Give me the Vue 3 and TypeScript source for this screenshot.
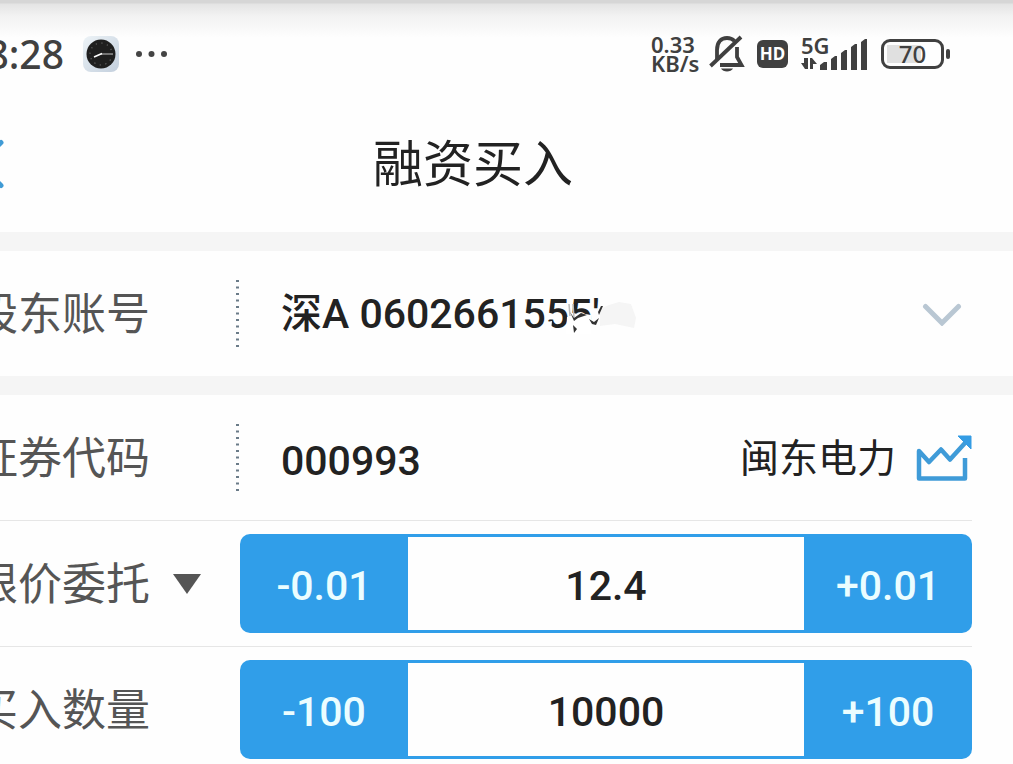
<script setup lang="ts">
import { ref } from 'vue'

interface Stepper {
  id: string
  step: string
  value: string
}

const account = ref("深A 0602661555'")
const code = ref('000993')
const orderType = ref('限价委托')
const price = ref<Stepper>({ id: 'price', step: '0.01', value: '12.4' })
const quantity = ref<Stepper>({ id: 'quantity', step: '100', value: '10000' })

function change(item: Stepper, sign: number) {
  const digits = item.step.includes('.') ? 2 : 0
  const next = Math.max(0, Number(item.value) + sign * Number(item.step))
  item.value = next.toFixed(digits)
}
</script>

<template>
  <div class="page">
    <header class="top">
      <div class="status">
        <div class="status-left">
          <span class="time">8:28</span>
          <svg class="clock" width="36" height="36" viewBox="0 0 36 36" aria-hidden="true">
            <defs>
              <linearGradient id="tile" x1="0" y1="0" x2="1" y2="1">
                <stop offset="0" stop-color="#edf3f7" />
                <stop offset="1" stop-color="#c3cfdd" />
              </linearGradient>
            </defs>
            <rect width="36" height="36" rx="8" fill="url(#tile)" />
            <circle cx="18" cy="18" r="14.5" fill="#1f1f1f" />
            <circle cx="18" cy="18" r="11" fill="none" stroke="#666" stroke-width="1.2" stroke-dasharray="1.2 4.56" />
            <path d="M18 18H30" stroke="#8a8a8a" stroke-width="1.6" />
            <path d="M11 21L19 17.500" stroke="#fff" stroke-width="1.6" />
          </svg>
          <svg class="dots" width="32" height="6" viewBox="0 0 32 6" fill="#444" aria-hidden="true">
            <circle cx="3" cy="3" r="3" />
            <circle cx="15.500" cy="3" r="3" />
            <circle cx="28" cy="3" r="3" />
          </svg>
        </div>
        <div class="status-right">
          <div class="speed"><span>0.33</span><span>KB/s</span></div>
          <svg class="bell" width="36" height="40" viewBox="0 0 36 40" fill="none" stroke="#404040" stroke-width="3.800" aria-hidden="true">
            <path d="M8 25V16C8 8 12 4 18 4C21 4 23.500 5 25.500 7" />
            <path d="M28 13V23L32.500 31H11" />
            <path d="M1.500 32L32 3" stroke-width="3.800" />
            <path d="M12 34.500H24C22 38.500 14 38.500 12 34.500Z" fill="#404040" stroke="none" />
          </svg>
          <span class="hd">HD</span>
          <div class="signal">
            <span class="net">5G</span>
            <svg width="68" height="34" viewBox="0 0 68 34" fill="#404040" aria-hidden="true">
              <path d="M4 21H8V32H5L1 26H4ZM10 21H12L17 27H13V32H10Z" />
              <path d="M20 33V28L24 25H27V33ZM31 33V22L35 19H37V33ZM41 33V16L45 13H47V33ZM51 33V10L55 7H57V33ZM61 33V5L65 2H67V33Z" />
            </svg>
          </div>
          <div class="battery"><span>70</span></div>
        </div>
      </div>
      <div class="title-bar">
        <button class="back" type="button" aria-label="返回">
          <svg width="28" height="52" viewBox="0 0 28 52" fill="none" stroke="#409bd5" stroke-width="5" stroke-linecap="round" aria-hidden="true">
            <path d="M25 4.500L4 26L25 47.500" />
          </svg>
        </button>
        <h1>融资买入</h1>
      </div>
    </header>

    <section class="group">
      <div class="row">
        <label class="name" for="account">股东账号</label>
        <svg class="divider" width="3" height="68" aria-hidden="true"><path d="M1.500 0V68" /></svg>
        <div class="field">
          <select id="account" v-model="account" class="value">
            <option>深A 0602661555'</option>
          </select>
          <svg class="smudge" width="110" height="64" viewBox="0 0 110 64" aria-hidden="true">
            <path d="M57 27L66 23L76 20L88 22L93 36L91 46L72 42L57 44Z" fill="#f5f5f5" />
            <path d="M2 24L6 24L4 34L9 33L6 38L3 37ZM3 40L9 39L8 50L3 45Z" fill="#fff" />
            <path d="M24 35L32 34L37 31L48 33V52H23Z" fill="#fff" />
            <path d="M26 22L27 34M30 22L31 36" fill="none" stroke="#bbb" stroke-width="1.500" />
            <path d="M27 30L31 36L38 31L44 33L35 36L31 39ZM46 37L51 40L56 36L53 43L49 42ZM30 43L34 47L31 51ZM55 30L58 24L60 24L56 33Z" fill="#333" />
          </svg>
          <svg class="chevron" width="40" height="24" viewBox="0 0 40 24" fill="none" stroke="#b9c7d3" stroke-width="5" stroke-linecap="round" aria-hidden="true">
            <path d="M3.500 4.500L20 21L36.500 4.500" />
          </svg>
        </div>
      </div>
    </section>

    <section class="group">
      <div class="row lined">
        <label class="name" for="code">证券代码</label>
        <svg class="divider" width="3" height="68" aria-hidden="true"><path d="M1.500 0V68" /></svg>
        <div class="field">
          <input id="code" v-model="code" class="value" type="text" inputmode="numeric" />
          <span class="stock">闽东电力</span>
          <button class="chart" type="button" aria-label="行情">
            <svg width="56" height="46" viewBox="0 0 56 46" fill="none" stroke="#3f9bd8" stroke-width="4.500" aria-hidden="true">
              <path d="M49 23V43.500H3V16L13 27L25 14.500L34 24.500L49 8" stroke-linejoin="round" />
              <path d="M42 1H55V14Z" fill="#349ce4" stroke="#349ce4" stroke-width="1" />
            </svg>
          </button>
        </div>
      </div>

      <div class="row lined">
        <select v-model="orderType" class="name" aria-label="委托方式">
          <option>限价委托</option>
        </select>
        <svg class="caret" width="28" height="20" viewBox="0 0 28 20" aria-hidden="true"><path d="M0 0H28L14 20Z" fill="#555" /></svg>
        <div class="stepper">
          <button type="button" @click="change(price, -1)">-0.01</button>
          <input :id="price.id" v-model="price.value" type="text" inputmode="decimal" aria-label="委托价格" />
          <button type="button" @click="change(price, 1)">+0.01</button>
        </div>
      </div>

      <div class="row">
        <label class="name" :for="quantity.id">买入数量</label>
        <div class="stepper">
          <button type="button" @click="change(quantity, -1)">-100</button>
          <input :id="quantity.id" v-model="quantity.value" type="text" inputmode="numeric" />
          <button type="button" @click="change(quantity, 1)">+100</button>
        </div>
      </div>
    </section>
  </div>
</template>

<style>
body {
  margin: 0;
  background: #fefefe;
}
</style>

<style scoped>
.page {
  overflow: hidden;
  color: #222;
  background: #f5f5f5;
  font-family: "Noto Sans CJK SC", sans-serif;
}

.page *,
.page {
  box-sizing: border-box;
}

button,
input,
select {
  margin: 0;
  padding: 0;
  border: 0;
  border-radius: 0;
  outline: 0;
  appearance: none;
  background: none;
  color: inherit;
  font: inherit;
}

svg {
  display: block;
  flex: none;
}

.top {
  background: linear-gradient(#d6d6d6 0, #d6d6d6 3px, #e4e4e4 4px, #f2f2f2 16px, #fefefe 38px);
}

.status {
  display: flex;
  align-items: center;
  justify-content: space-between;
  height: 96px;
  padding: 12px 69px 0 0;
  color: #404040;
  font-family: "Noto Sans", sans-serif;
}

.status-left,
.status-right {
  display: flex;
  align-items: center;
}

.time {
  display: flex;
  justify-content: flex-end;
  width: 64px;
  font-size: 39px;
  font-weight: 500;
  line-height: 48px;
}

.clock {
  margin-left: 19px;
}

.dots {
  margin-left: 17px;
}

.speed {
  display: flex;
  flex-direction: column;
  width: 50px;
  font-size: 22px;
  font-weight: 600;
  line-height: 19px;
}

.bell {
  margin-left: 8px;
}

.hd {
  width: 31px;
  margin-left: 12px;
  border-radius: 6px;
  background: #404040;
  color: #fff;
  font-size: 17px;
  font-weight: 700;
  line-height: 28px;
  text-align: center;
}

.signal {
  position: relative;
  margin-left: 12px;
}

.net {
  position: absolute;
  top: -2px;
  left: 1px;
  font-size: 22px;
  font-weight: 600;
  line-height: 20px;
}

.battery {
  position: relative;
  width: 63px;
  margin-left: 13px;
  border: 3px solid #404040;
  border-radius: 9px;
  background: linear-gradient(#e0e0e0, #e0e0e0) 3px 3px / 34px 18px no-repeat;
  font-size: 24px;
  font-weight: 500;
  line-height: 24px;
  text-align: center;
}

.battery::after {
  content: "";
  position: absolute;
  top: 7px;
  right: -9px;
  width: 4px;
  height: 10px;
  border-radius: 2px;
  background: #404040;
}

.title-bar {
  display: grid;
  grid-template-columns: 67px 1fr 67px;
  align-items: center;
  height: 136px;
}

.back {
  width: 28px;
  margin-left: -24px;
}

h1 {
  margin: 0 0 0 -67px;
  padding-bottom: 8px;
  font-size: 50px;
  font-weight: 400;
  line-height: 72px;
  text-align: center;
}

.group {
  margin-top: 19px;
  padding-right: 41px;
  background: #fefefe;
}

.row {
  display: flex;
  align-items: center;
  height: 125px;
}

.lined {
  height: 126px;
  border-bottom: 1px solid #e6e6e6;
}

.name {
  flex: none;
  width: 176px;
  margin-left: -26px;
  padding-bottom: 6px;
  color: #555;
  font-size: 44px;
  line-height: 64px;
  white-space: nowrap;
}

.divider {
  margin-left: 86px;
  fill: none;
  stroke: #6a7b88;
  stroke-width: 3;
  stroke-dasharray: 2 4.5;
}

.caret {
  margin: 0 -51px 0 23px;
}

.field {
  position: relative;
  display: flex;
  flex: 1;
  align-items: center;
  min-width: 0;
  padding-left: 42px;
}

.value,
.stepper {
  font-family: Roboto, "Noto Sans CJK SC", sans-serif;
  font-size: 41px;
  font-weight: 500;
}

.value {
  flex: 1;
  min-width: 0;
  line-height: 64px;
}

input.value {
  padding-top: 6px;
}

.smudge {
  position: absolute;
  top: 0;
  left: 304px;
  pointer-events: none;
}

.chevron {
  margin-right: 10px;
  pointer-events: none;
}

.stock {
  padding-bottom: 6px;
  font-size: 39px;
  line-height: 58px;
}

.chart {
  margin-left: 20px;
}

.stepper {
  display: flex;
  flex: 1;
  min-width: 0;
  height: 99px;
  margin-left: 90px;
  border-radius: 10px;
  background: #309ee9;
}

.stepper button {
  flex: 0 0 168px;
  padding-top: 4px;
  color: #ebfdff;
}

.stepper input {
  flex: 1;
  min-width: 0;
  margin: 3px 0;
  padding-top: 4px;
  background: #fefefe;
  text-align: center;
}
</style>
